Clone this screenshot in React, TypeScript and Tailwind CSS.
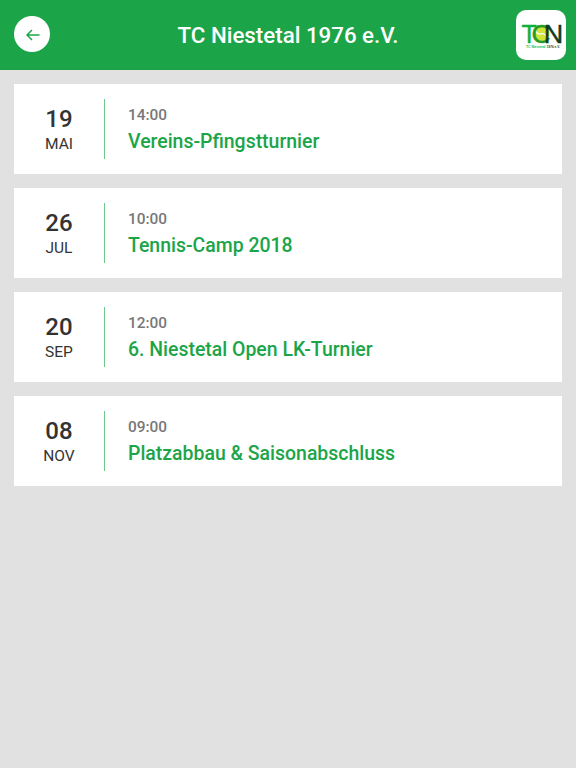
import React from 'react'

const events = [
    { day: '19', month: 'MAI', time: '14:00', title: 'Vereins-Pfingstturnier' },
    { day: '26', month: 'JUL', time: '10:00', title: 'Tennis-Camp 2018' },
    { day: '20', month: 'SEP', time: '12:00', title: '6. Niestetal Open LK-Turnier' },
    { day: '08', month: 'NOV', time: '09:00', title: 'Platzabbau & Saisonabschluss' },
]

function ClubLogo() {
    return (
        <svg width="50" height="50" viewBox="0 0 50 50" fontFamily="Liberation Sans, sans-serif">
            <circle cx="25.8" cy="23.5" r="7.6" fill="#d3e33a" />
            <path d="M20 21C22 28 28 19 31 28" fill="none" stroke="#fff" strokeWidth="1.3" />
            <g fontSize="25" strokeWidth="0.4">
                <text x="5.5" y="32.5" fill="#0fb13c" stroke="#0fb13c">T</text>
                <text x="15.5" y="32.5" textLength="19" lengthAdjust="spacingAndGlyphs" fill="#259a25" stroke="#259a25">C</text>
                <text x="27.7" y="32.5" textLength="19.5" lengthAdjust="spacingAndGlyphs" fill="#123d1c" stroke="#123d1c">N</text>
            </g>
            <text x="10" y="37.8" fontSize="4" fontWeight="bold" textLength="19.5" lengthAdjust="spacingAndGlyphs" fill="#12c04a">TC Niestetal</text>
            <text x="30.8" y="37.8" fontSize="4" fontWeight="bold" textLength="13" lengthAdjust="spacingAndGlyphs" fill="#123d1c">1976 e.V.</text>
        </svg>
    )
}

function Header() {
    return (
        <header className="flex h-[70px] items-center bg-[#1ba548] pl-3.5 pr-2.5">
            <div className="flex w-[50px] pb-[3px]">
                <button className="flex size-9 items-center justify-center rounded-full bg-white">
                    <svg className="mt-[3px] ml-px" width="14" height="12" viewBox="0 0 14 12" fill="none" stroke="#1ba548" strokeWidth="1.5">
                        <path d="M13.5 6H1.5M6 1L1 6L6 11" />
                    </svg>
                </button>
            </div>
            <h1 className="flex-1 pt-0.5 pr-1 text-center text-[22.3px] font-medium text-white">TC Niestetal 1976 e.V.</h1>
            <div className="size-[50px] overflow-hidden rounded-[10px] bg-white">
                <ClubLogo />
            </div>
        </header>
    )
}

export default function App() {
    return (
        <div className="min-h-screen bg-[#e1e1e1] font-[Roboto,sans-serif]">
            <Header />
            <ul className="flex flex-col gap-3.5 p-3.5">
                {events.map((event) => (
                    <li key={event.title} className="flex h-[90px] items-center bg-white">
                        <div className="flex h-[60px] w-[91px] flex-col items-center justify-center border-r border-[#6fc88b] text-[#333]">
                            <span className="text-2xl leading-7 font-medium">{event.day}</span>
                            <span className="pt-px text-[15.5px] leading-5">{event.month}</span>
                        </div>
                        <div className="pl-[23px]">
                            <p className="text-[15.4px] leading-6 font-medium text-[#777]">{event.time}</p>
                            <p className="text-[19.45px] leading-[29px] font-medium text-[#1ba548]">{event.title}</p>
                        </div>
                    </li>
                ))}
            </ul>
        </div>
    )
}
